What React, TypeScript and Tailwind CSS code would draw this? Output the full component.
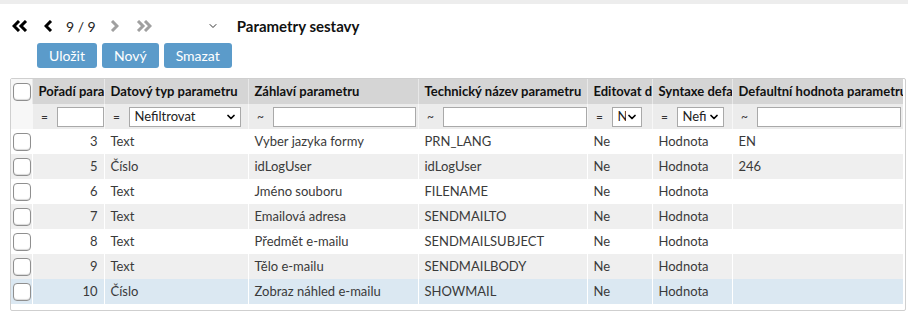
import { ChevronDown } from "lucide-react";

type Row = {
  order: number;
  type: string;
  label: string;
  tech: string;
  edit: string;
  syntax: string;
  def: string;
};

const rows: Row[] = [
  { order: 3, type: "Text", label: "Vyber jazyka formy", tech: "PRN_LANG", edit: "Ne", syntax: "Hodnota", def: "EN" },
  { order: 5, type: "Číslo", label: "idLogUser", tech: "idLogUser", edit: "Ne", syntax: "Hodnota", def: "246" },
  { order: 6, type: "Text", label: "Jméno souboru", tech: "FILENAME", edit: "Ne", syntax: "Hodnota", def: "" },
  { order: 7, type: "Text", label: "Emailová adresa", tech: "SENDMAILTO", edit: "Ne", syntax: "Hodnota", def: "" },
  { order: 8, type: "Text", label: "Předmět e-mailu", tech: "SENDMAILSUBJECT", edit: "Ne", syntax: "Hodnota", def: "" },
  { order: 9, type: "Text", label: "Tělo e-mailu", tech: "SENDMAILBODY", edit: "Ne", syntax: "Hodnota", def: "" },
  { order: 10, type: "Číslo", label: "Zobraz náhled e-mailu", tech: "SHOWMAIL", edit: "Ne", syntax: "Hodnota", def: "" },
];

// header labels are clipped by the column width, like in the grid
const headers = [
  "Pořadí parametru",
  "Datový typ parametru",
  "Záhlaví parametru",
  "Technický název parametru",
  "Editovat defaultní hodnotu",
  "Syntaxe defaultní hodnoty",
  "Defaultní hodnota parametru",
];

function Box() {
  return (
    <span className="block w-[18px] h-[18px] rounded-[4px] border border-[#8f8f8f] bg-white shadow-[inset_0_-1px_1px_rgba(0,0,0,0.15)]" />
  );
}

function TextFilter({ op, w }: { op: string; w: string }) {
  return (
    <div className="flex items-center h-full">
      <span className="text-[12px] text-[#333] text-center w-[24px]">{op}</span>
      <div className={`${w} h-[20px] bg-white border border-[#a9a9a9]`} />
    </div>
  );
}

function SelectFilter({ text, w }: { text: string; w: string }) {
  return (
    <div className="flex items-center h-full">
      <span className="text-[12px] text-[#333] w-[24px] text-center">=</span>
      <div className={`${w} h-[20px] bg-white border border-[#a9a9a9] flex items-center pl-[5px] pr-[3px] overflow-hidden`}>
        <span className="flex-1 overflow-hidden whitespace-nowrap text-[13px] text-[#222] leading-none">{text}</span>
        <ChevronDown size={12} strokeWidth={3.5} className="text-black shrink-0" />
      </div>
    </div>
  );
}

export default function App() {
  return (
    <div className="w-[908px] h-[316px] bg-white overflow-hidden font-['Lato','Noto_Sans',sans-serif] text-[#3a3a3a]">
      <div className="h-[4px] bg-[#ededed]" />
      <div className="flex items-center h-[36px] pt-[8px] pl-[12px]">
        <svg width="16" height="12" viewBox="0 0 16 12" className="shrink-0">
          <polyline points="7,1 2,6 7,11" fill="none" stroke="#000" strokeWidth="3" />
          <polyline points="14,1 9,6 14,11" fill="none" stroke="#000" strokeWidth="3" />
        </svg>
        <svg width="9" height="12" viewBox="0 0 9 12" className="ml-[16px] shrink-0">
          <polyline points="7,1 2,6 7,11" fill="none" stroke="#000" strokeWidth="3" />
        </svg>
        <span className="ml-[13px] text-[14px] text-[#222]">9 / 9</span>
        <svg width="9" height="12" viewBox="0 0 9 12" className="ml-[14px] shrink-0">
          <polyline points="2,1 7,6 2,11" fill="none" stroke="#a0a0a0" strokeWidth="3" />
        </svg>
        <svg width="16" height="12" viewBox="0 0 16 12" className="ml-[17px] shrink-0">
          <polyline points="2,1 7,6 2,11" fill="none" stroke="#a0a0a0" strokeWidth="3" />
          <polyline points="9,1 14,6 9,11" fill="none" stroke="#a0a0a0" strokeWidth="3" />
        </svg>
        <ChevronDown size={12} strokeWidth={2} className="ml-[55px] text-[#333]" />
        <span className="ml-[18px] text-[15px] font-bold text-[#111]">Parametry sestavy</span>
      </div>
      <div className="flex gap-[5px] pl-[37px] pt-[3px]">
        {["Uložit", "Nový", "Smazat"].map((b) => (
          <button
            key={b}
            className="h-[25px] px-[12px] rounded-[3px] bg-[#5b9bca] text-white text-[14px]"
          >
            {b}
          </button>
        ))}
      </div>
      <div className="ml-[10px] mt-[10px] w-[896px] h-[233px] border border-[#cfcfcf] rounded-[2px] bg-white">
        <table className="table-fixed border-collapse w-[892px] text-[13px]">
          <colgroup>
            <col className="w-[21px]" />
            <col className="w-[72px]" />
            <col className="w-[144px]" />
            <col className="w-[170px]" />
            <col className="w-[169px]" />
            <col className="w-[65px]" />
            <col className="w-[80px]" />
            <col className="w-[171px]" />
          </colgroup>
          <thead>
            <tr className="h-[25px]">
              <th className="bg-[#f7f7f7] p-0 pl-[2px]">
                <Box />
              </th>
              {headers.map((h) => (
                <th
                  key={h}
                  className="bg-[#d5d5d5] border-l border-[#e8e8e8] text-left font-bold text-[#111] p-0"
                >
                  <div className="overflow-hidden whitespace-nowrap px-[6px]">{h}</div>
                </th>
              ))}
            </tr>
            <tr className="h-[25px] bg-[#ececec]">
              <td className="bg-[#f7f7f7] p-0" />
              <td className="border-l border-[#f7f7f7] p-0">
                <TextFilter op="=" w="w-[47px]" />
              </td>
              <td className="border-l border-[#f7f7f7] p-0">
                <SelectFilter text="Nefiltrovat" w="w-[112px]" />
              </td>
              <td className="border-l border-[#f7f7f7] p-0">
                <TextFilter op="~" w="w-[143px]" />
              </td>
              <td className="border-l border-[#f7f7f7] p-0">
                <TextFilter op="~" w="w-[144px]" />
              </td>
              <td className="border-l border-[#f7f7f7] p-0">
                <SelectFilter text="N" w="w-[30px]" />
              </td>
              <td className="border-l border-[#f7f7f7] p-0">
                <SelectFilter text="Nefi" w="w-[47px]" />
              </td>
              <td className="border-l border-[#f7f7f7] p-0">
                <TextFilter op="~" w="w-[144px]" />
              </td>
            </tr>
          </thead>
          <tbody>
            {rows.map((r, i) => {
              const bg = i === rows.length - 1 ? "bg-[#dbe8f2]" : i % 2 === 1 ? "bg-[#efefef]" : "bg-white";
              const cell = "border-l border-white px-[6px] whitespace-nowrap overflow-hidden";
              return (
                <tr key={r.order} className={`h-[25px] ${bg}`}>
                  <td className="p-0 pl-[2px]">
                    <Box />
                  </td>
                  <td className={`${cell} text-right`}>{r.order}</td>
                  <td className={cell}>{r.type}</td>
                  <td className={cell}>{r.label}</td>
                  <td className={cell}>{r.tech}</td>
                  <td className={cell}>{r.edit}</td>
                  <td className={cell}>{r.syntax}</td>
                  <td className={cell}>{r.def}</td>
                </tr>
              );
            })}
          </tbody>
        </table>
      </div>
    </div>
  );
}
